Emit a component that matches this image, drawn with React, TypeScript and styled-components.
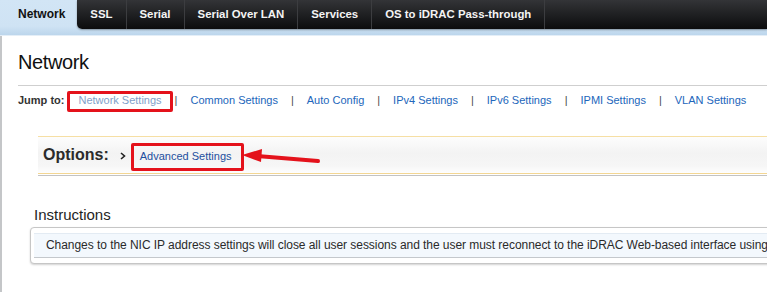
import React from 'react';
import styled, { createGlobalStyle } from 'styled-components';

const GlobalStyle = createGlobalStyle`
  html, body {
    margin: 0;
    padding: 0;
    overflow: hidden;
    background: #fff;
  }
  body {
    font-family: "Liberation Sans", Arial, sans-serif;
  }
`;

const Page = styled.div`
  width: 767px;
  height: 292px;
  overflow: hidden;
  display: flex;
  flex-direction: column;
`;

/* Tab strip */
const TabBar = styled.div`
  display: flex;
  align-items: flex-start;
  height: 36px;
  background: linear-gradient(to bottom, #d2e5f5 0%, #cfe3f4 75%, #bcd6ec 100%);
  border-bottom: 1px solid #e4eef7;
  box-sizing: border-box;
`;

const ActiveTab = styled.div`
  height: 29px;
  line-height: 29px;
  padding: 0 12px 0 18px;
  font-size: 12px;
  font-weight: bold;
  color: #111;
`;

const DarkStrip = styled.div`
  flex: 1;
  display: flex;
  height: 29px;
  background: linear-gradient(to bottom, #333437 0%, #1d1e20 55%, #0c0c0d 100%);
  border-bottom-left-radius: 5px;
  box-shadow: 0 1px 2px rgba(0, 0, 0, 0.35);
`;

const Tab = styled.div`
  height: 29px;
  line-height: 29px;
  padding: 0 13px;
  font-size: 11.4px;
  font-weight: bold;
  color: #f4f4f4;
  border-right: 1px solid #3c3d40;
  white-space: nowrap;
`;

/* Main content */
const Content = styled.div`
  flex: 1;
  border-left: 2px solid #c4c6c8;
  padding-left: 16px;
  overflow: hidden;
`;

const Title = styled.h1`
  margin: 14px 0 0;
  font-size: 20px;
  line-height: 24px;
  font-weight: normal;
  letter-spacing: -0.4px;
  color: #111;
`;

const Rule = styled.div`
  margin-top: 11px;
  height: 1px;
  background: #cfcfcf;
`;

const JumpRow = styled.div`
  display: flex;
  align-items: center;
  margin-top: 7px;
  font-size: 11px;
  line-height: 14px;
  white-space: nowrap;
`;

const JumpLabel = styled.span`
  font-weight: bold;
  color: #333;
  margin-right: 14px;
`;

const JumpLink = styled.a<{ $visited?: boolean; $marked?: boolean }>`
  position: relative;
  color: ${p => (p.$visited ? '#7f9fc9' : '#2266bb')};
  text-decoration: none;

  ${p => p.$marked && `
    &::after {
      content: '';
      position: absolute;
      left: -11px;
      right: -11px;
      top: -2px;
      bottom: -5px;
      border: 3px solid #e4121b;
      border-radius: 2px;
    }
  `}
`;

const Pipe = styled.span`
  margin: 0 13px;
  color: #4a4a4a;
`;

const OptionsBar = styled.div`
  position: relative;
  display: flex;
  align-items: center;
  margin: 29px 0 0 20px;
  height: 36px;
  padding-left: 5px;
  border-top: 1px solid #f6dfa4;
  border-bottom: 1px solid #f3d693;
  background: linear-gradient(to bottom, #fdfdfd 0%, #f3f3f3 45%, #f6f6f6 80%, #fefefe 100%);
  box-shadow: 0 1px 0 #fff, 0 2px 0 #c3c3c3;
`;

const OptionsLabel = styled.span`
  font-size: 16px;
  line-height: 18px;
  font-weight: bold;
  color: #2b2b2b;
`;

const Chevron = styled.svg`
  margin: 2px 14px 0 11px;
`;

const AdvancedLink = styled.a`
  position: relative;
  margin-top: 2px;
  font-size: 11px;
  line-height: 14px;
  color: #1d4f9e;
  text-decoration: none;

  &::after {
    content: '';
    position: absolute;
    left: -9px;
    right: -12px;
    top: -6px;
    bottom: -8px;
    border: 3px solid #e4121b;
    border-radius: 2px;
  }
`;

const Arrow = styled.svg`
  position: absolute;
  left: 202px;
  top: 8px;
`;

const SectionTitle = styled.div`
  margin: 32px 0 0 16px;
  font-size: 15px;
  line-height: 18px;
  color: #1e1e1e;
`;

const InfoBox = styled.div`
  margin: 3px 0 0 12px;
  width: 900px;
  padding: 5px 0 5px 3px;
  border: 1px solid #c6c6c6;
  border-radius: 4px;
  box-shadow: 0 1px 2px rgba(0, 0, 0, 0.18);
  background: #fff;
`;

const InfoRow = styled.div`
  height: 25px;
  line-height: 23px;
  padding-left: 12px;
  background: #f3f8fd;
  border-top: 1px solid #e3ebf3;
  border-bottom: 1px solid #c4c8cc;
  font-size: 12px;
  letter-spacing: -0.05px;
  color: #2a2a2a;
  white-space: nowrap;
  box-sizing: border-box;
`;

const tabs = ['SSL', 'Serial', 'Serial Over LAN', 'Services', 'OS to iDRAC Pass-through'];

const jumpLinks = [
  'Network Settings',
  'Common Settings',
  'Auto Config',
  'IPv4 Settings',
  'IPv6 Settings',
  'IPMI Settings',
  'VLAN Settings',
];

export default function App() {
  return (
    <Page>
      <GlobalStyle />
      <TabBar>
        <ActiveTab>Network</ActiveTab>
        <DarkStrip>
          {tabs.map(t => (
            <Tab key={t}>{t}</Tab>
          ))}
        </DarkStrip>
      </TabBar>

      <Content>
        <Title>Network</Title>
        <Rule />

        <JumpRow>
          <JumpLabel>Jump to:</JumpLabel>
          {jumpLinks.map((l, i) => (
            <React.Fragment key={l}>
              {i > 0 && <Pipe>|</Pipe>}
              <JumpLink href="#" $visited={i === 0} $marked={i === 0}>
                {l}
              </JumpLink>
            </React.Fragment>
          ))}
        </JumpRow>

        <OptionsBar>
          <OptionsLabel>Options:</OptionsLabel>
          <Chevron width="6" height="8" viewBox="0 0 6 8">
            <polyline points="1,1 4.5,4 1,7" fill="none" stroke="#222" strokeWidth="1.6" />
          </Chevron>
          <AdvancedLink href="#">Advanced Settings</AdvancedLink>
          <Arrow width="84" height="22" viewBox="0 0 84 22">
            <line x1="17" y1="11" x2="78" y2="16" stroke="#e4121b" strokeWidth="4" strokeLinecap="round" />
            <polygon points="2,10 22,4 21,17" fill="#e4121b" />
          </Arrow>
        </OptionsBar>

        <SectionTitle>Instructions</SectionTitle>
        <InfoBox>
          <InfoRow>
            Changes to the NIC IP address settings will close all user sessions and the user must reconnect to the iDRAC Web-based interface using the new settings.
          </InfoRow>
        </InfoBox>
      </Content>
    </Page>
  );
}
